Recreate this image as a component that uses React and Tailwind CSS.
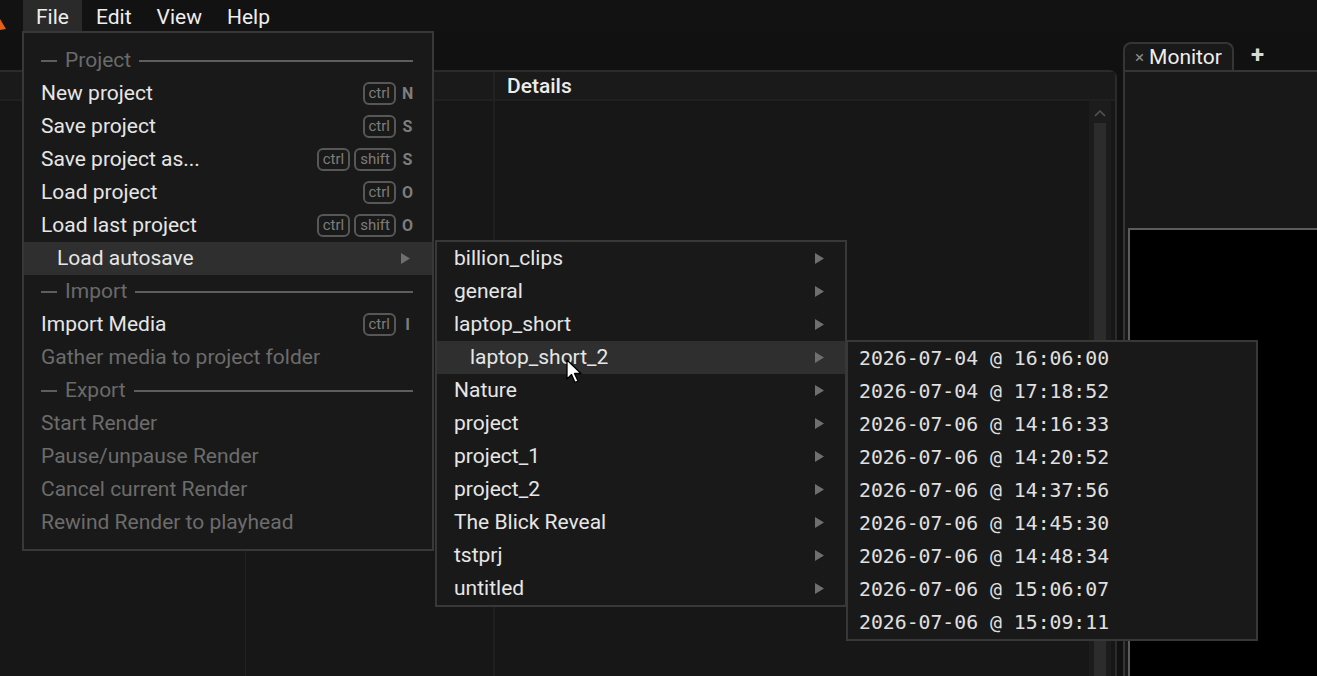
import React from "react";

const fileItems = [
  { section: "Project" },
  { label: "New project", keys: ["ctrl"], key: "N" },
  { label: "Save project", keys: ["ctrl"], key: "S" },
  { label: "Save project as...", keys: ["ctrl", "shift"], key: "S" },
  { label: "Load project", keys: ["ctrl"], key: "O" },
  { label: "Load last project", keys: ["ctrl", "shift"], key: "O" },
  { label: "Load autosave", sub: true, active: true },
  { section: "Import" },
  { label: "Import Media", keys: ["ctrl"], key: "I" },
  { label: "Gather media to project folder", disabled: true },
  { section: "Export" },
  { label: "Start Render", disabled: true },
  { label: "Pause/unpause Render", disabled: true },
  { label: "Cancel current Render", disabled: true },
  { label: "Rewind Render to playhead", disabled: true },
];

const projects = [
  "billion_clips",
  "general",
  "laptop_short",
  "laptop_short_2",
  "Nature",
  "project",
  "project_1",
  "project_2",
  "The Blick Reveal",
  "tstprj",
  "untitled",
];

const saves = [
  "2026-07-04 @ 16:06:00",
  "2026-07-04 @ 17:18:52",
  "2026-07-06 @ 14:16:33",
  "2026-07-06 @ 14:20:52",
  "2026-07-06 @ 14:37:56",
  "2026-07-06 @ 14:45:30",
  "2026-07-06 @ 14:48:34",
  "2026-07-06 @ 15:06:07",
  "2026-07-06 @ 15:09:11",
];

function Arrow() {
  return (
    <svg width="9" height="11" viewBox="0 0 9 11" className="shrink-0">
      <path d="M0 0 L9 5.5 L0 11 Z" fill="#6f6f6f" />
    </svg>
  );
}

function Kbd({ children }) {
  return (
    <span className="h-[23px] px-[4px] flex items-center rounded-[6px] border-2 border-[#575757] text-[15px] leading-none text-[#7d7d7d]">
      {children}
    </span>
  );
}

function FileRow({ item }) {
  if (item.section) {
    return (
      <div className="h-[33px] flex items-center pl-[17px] pr-[19px] gap-[8px]">
        <span className="w-[16px] h-[2px] bg-[#5e5e5e]" />
        <span className="text-[21px] text-[#6a6a6a]">{item.section}</span>
        <span className="flex-1 h-[2px] bg-[#5e5e5e]" />
      </div>
    );
  }
  return (
    <div
      className={
        "h-[33px] flex items-center pr-[19px] " +
        (item.active ? "bg-[#2f2f2f] pl-[33px]" : "pl-[17px]")
      }
    >
      <span
        className={
          "flex-1 text-[21px] " +
          (item.disabled ? "text-[#6c6c6c]" : "text-[#e6e6e6]")
        }
      >
        {item.label}
      </span>
      {item.keys && (
        <div className="flex items-center gap-[4px]">
          {item.keys.map((k) => (
            <Kbd key={k}>{k}</Kbd>
          ))}
          <span className="w-[11px] ml-[2px] text-[16px] font-bold text-[#7d7d7d] text-center">
            {item.key}
          </span>
        </div>
      )}
      {item.sub && (
        <span className="mr-[3px]">
          <Arrow />
        </span>
      )}
    </div>
  );
}

export default function App() {
  return (
    <div className="relative w-[1317px] h-[676px] overflow-hidden bg-[#111111] font-['Roboto',sans-serif] flex flex-col">
      {/* menubar */}
      <div className="h-[33px] flex items-stretch bg-[#121212] relative">
        <svg width="8" height="12" viewBox="0 0 8 12" className="absolute left-0 top-[19px]">
          <path d="M0 0 L6 10 L0 11 Z" fill="#e85d12" />
        </svg>
        <div className="ml-[23px] w-[59px] pt-[2px] bg-[#2a2a2a] flex items-center justify-center text-[21px] text-[#eeeeee]">
          File
        </div>
        <div className="flex items-center pt-[2px] ml-[14px] gap-[25px] text-[21px] text-[#eeeeee]">
          <span>Edit</span>
          <span>View</span>
          <span>Help</span>
        </div>
      </div>

      {/* tab row */}
      <div className="h-[37px] flex items-end bg-[#111111]">
        <div className="w-[111px] h-[28px] absolute top-[42px] left-[1123px] rounded-t-[8px] border-2 border-b-0 border-[#353535] bg-[#191919] flex items-center pl-[10px] gap-[5px]">
          <span className="text-[17px] text-[#8a8a8a] leading-none">×</span>
          <span className="text-[21px] text-[#efefef] leading-none">Monitor</span>
        </div>
        <span className="absolute left-[1251px] top-[37px] text-[24px] font-bold text-[#d8d8d8]">+</span>
      </div>

      {/* main panels */}
      <div className="flex-1 flex gap-[6px]">
        {/* left workspace panel */}
        <div className="w-[1117px] flex flex-col border-t-2 border-r-2 border-[#2b2b2b] rounded-tr-[8px] bg-[#171717]">
          <div className="h-[29px] flex border-b-2 border-[#202020] bg-[#1a1a1a]">
            <div className="w-[246px] border-r border-[#222]" />
            <div className="w-[249px] border-r-2 border-[#222]" />
            <div className="flex-1 pl-[12px] pt-[2px] flex items-center text-[21px] font-medium text-[#ececec]">
              Details
            </div>
          </div>
          <div className="flex-1 flex">
            <div className="w-[246px] border-r border-[#222]" />
            <div className="w-[249px] border-r-2 border-[#1f1f1f]" />
            <div className="flex-1" />
            <div className="w-[22px] mr-[4px] bg-[#1c1c1c] flex flex-col items-center">
              <svg width="12" height="8" viewBox="0 0 12 8" className="mt-[8px]">
                <path d="M1 7 L6 2 L11 7" stroke="#555" strokeWidth="1.5" fill="none" />
              </svg>
              <div className="mt-[6px] w-[12px] flex-1 bg-[#2c2c2c]" />
            </div>
          </div>
        </div>

        {/* monitor panel */}
        <div className="flex-1 flex flex-col border-l-2 border-t-2 border-[#353535] bg-[#181818] pt-[156px] pl-[3px]">
          <div className="flex-1 bg-black border-l-2 border-t-2 border-[#5c5c5c]" />
        </div>
      </div>

      {/* file menu */}
      <div className="absolute left-[22px] top-[31px] w-[412px] border-2 border-[#383838] bg-[#191919] pt-[11px] pb-[10px]">
        {fileItems.map((item, i) => (
          <FileRow key={i} item={item} />
        ))}
      </div>

      {/* autosave projects submenu */}
      <div className="absolute left-[435px] top-[240px] w-[412px] border-2 border-[#383838] bg-[#191919]">
        {projects.map((p) => {
          const active = p === "laptop_short_2";
          return (
            <div
              key={p}
              className={
                "h-[33px] flex items-center pr-[21px] " +
                (active ? "bg-[#2f2f2f] pl-[33px]" : "pl-[17px]")
              }
            >
              <span className="flex-1 text-[21px] text-[#e6e6e6]">{p}</span>
              <Arrow />
            </div>
          );
        })}
      </div>

      {/* autosave timestamps submenu */}
      <div className="absolute left-[846px] top-[340px] w-[412px] border-2 border-[#383838] bg-[#191919]">
        {saves.map((s) => (
          <div
            key={s}
            className="h-[33px] flex items-center pl-[11px] text-[19.8px] text-[#e0e0e0] font-['DejaVu_Sans_Mono',monospace]"
          >
            {s}
          </div>
        ))}
      </div>

      {/* mouse pointer */}
      <svg width="18" height="26" viewBox="0 0 18 26" className="absolute left-[566px] top-[359px]">
        <path
          d="M1 1 L1 20 L5.5 15.5 L9 23.5 L12 22 L8.5 14.5 L15 14.5 Z"
          fill="#ffffff"
          stroke="#000000"
          strokeWidth="1.3"
          strokeLinejoin="round"
        />
      </svg>
    </div>
  );
}
